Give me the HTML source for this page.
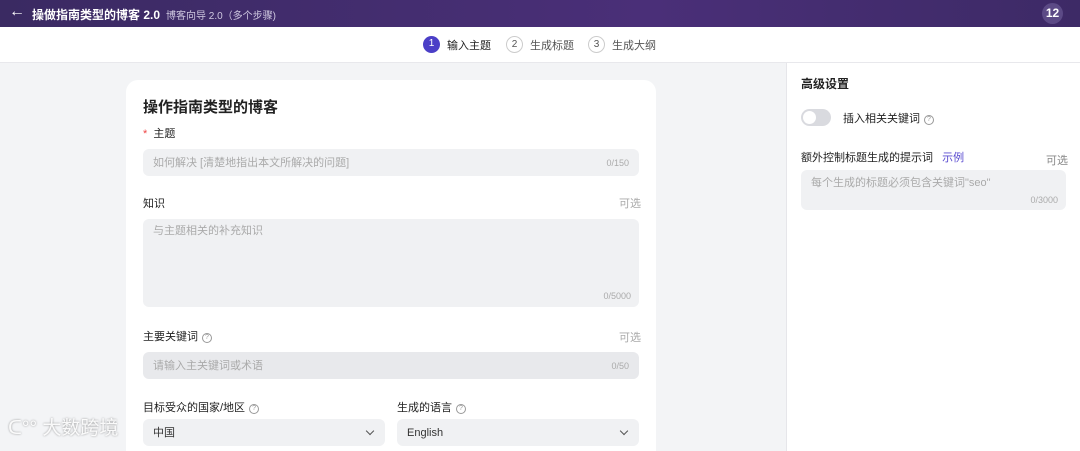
<!DOCTYPE html>
<html><head><meta charset="utf-8"><style>
*{box-sizing:border-box;margin:0;padding:0}
html,body{width:1080px;height:451px;overflow:hidden}
body{background:#f3f4f6;font-family:"Liberation Sans","Noto Sans CJK SC",sans-serif;position:relative;color:#222}
.abs{position:absolute}
.top{left:0;top:0;width:1080px;height:27px;background:linear-gradient(90deg,#3a2a62,#4a2f78 60%,#3d2a66)}
.steps{left:0;top:27px;width:1080px;height:36px;background:#fff;border-bottom:1px solid #e8e8ec}
.right{left:786px;top:63px;width:294px;height:388px;background:#fff;border-left:1px solid #e6e6ea}
.card{left:126px;top:80px;width:530px;height:371px;background:#fff;border-radius:12px 12px 0 0}
.inp{background:#f0f1f3;border-radius:6px;font-size:11px;color:#aaa}
.inp span{line-height:14px}
.lbl{font-size:11px;color:#222}
.opt{font-size:11px;color:#aaa}
.circ{width:17px;height:17px;border-radius:50%;font-size:10px;text-align:center;line-height:16px}
.q{display:inline-block;width:10px;height:10px;border:1px solid #999;border-radius:50%;font-size:7px;line-height:8px;text-align:center;color:#999;vertical-align:1px;margin-left:4px}
.chev{position:absolute;right:12px;top:9px;width:6px;height:6px;border-right:1px solid #555;border-bottom:1px solid #555;transform:rotate(45deg)}
</style></head><body>
<div class="abs top"></div>
<div class="abs" style="left:9px;top:4px;color:#fff;font-size:16px;line-height:16px">←</div>
<div class="abs" style="left:32px;top:6px;color:#fff;font-size:12px;font-weight:bold">操做指南类型的博客 2.0</div>
<div class="abs" style="left:166px;top:7px;color:#cfc8e0;font-size:10px">博客向导 2.0（多个步骤)</div>
<div class="abs" style="left:1042px;top:3px;width:21px;height:21px;border-radius:50%;background:#5c4a86;color:#fff;font-size:12px;text-align:center;line-height:21px;font-weight:bold">12</div>
<div class="abs steps"></div>
<div class="abs circ" style="left:423px;top:36px;background:#4b3fc7;color:#fff">1</div>
<div class="abs" style="left:447px;top:37px;font-size:11px;color:#222">输入主题</div>
<div class="abs circ" style="left:506px;top:36px;border:1px solid #ccc;color:#555">2</div>
<div class="abs" style="left:530px;top:37px;font-size:11px;color:#555">生成标题</div>
<div class="abs circ" style="left:588px;top:36px;border:1px solid #ccc;color:#555">3</div>
<div class="abs" style="left:612px;top:37px;font-size:11px;color:#555">生成大纲</div>

<div class="abs card"></div>
<div class="abs" style="left:143px;top:96px;font-size:15px;font-weight:bold">操作指南类型的博客</div>
<div class="abs lbl" style="left:143px;top:125px"><span style="color:#e44">*</span>&nbsp; 主题</div>
<div class="abs inp" style="left:143px;top:149px;width:496px;height:27px"><span class="abs" style="left:10px;top:7px">如何解决 [清楚地指出本文所解决的问题]</span><span class="abs" style="right:10px;top:7px;font-size:9px">0/150</span></div>
<div class="abs lbl" style="left:143px;top:195px">知识</div>
<div class="abs opt" style="left:619px;top:195px">可选</div>
<div class="abs inp" style="left:143px;top:219px;width:496px;height:88px"><span class="abs" style="left:10px;top:5px">与主题相关的补充知识</span><span class="abs" style="right:8px;bottom:4px;font-size:9px">0/5000</span></div>
<div class="abs lbl" style="left:143px;top:328px">主要关键词<span class="q">?</span></div>
<div class="abs opt" style="left:619px;top:329px">可选</div>
<div class="abs inp" style="left:143px;top:352px;width:496px;height:27px;background:#e8e9ec"><span class="abs" style="left:10px;top:7px">请输入主关键词或术语</span><span class="abs" style="right:10px;top:7px;font-size:9px">0/50</span></div>
<div class="abs lbl" style="left:143px;top:399px">目标受众的国家/地区<span class="q">?</span></div>
<div class="abs lbl" style="left:397px;top:399px">生成的语言<span class="q">?</span></div>
<div class="abs inp" style="left:143px;top:419px;width:242px;height:27px;color:#333"><span class="abs" style="left:10px;top:7px">中国</span><span class="chev"></span></div>
<div class="abs inp" style="left:397px;top:419px;width:242px;height:27px;color:#333"><span class="abs" style="left:10px;top:7px">English</span><span class="chev"></span></div>

<div class="abs" style="left:8px;top:418px;font-size:19px;line-height:22px;color:rgba(255,255,255,.92);text-shadow:0 0 2px rgba(0,0,0,.4)">ᑕ°° 大数跨境</div>

<div class="abs right"></div>
<div class="abs" style="left:801px;top:75px;font-size:12px;font-weight:bold">高级设置</div>
<div class="abs" style="left:801px;top:109px;width:30px;height:17px;border-radius:9px;background:#d9dadf"><div class="abs" style="left:2px;top:2px;width:13px;height:13px;border-radius:50%;background:#fff"></div></div>
<div class="abs lbl" style="left:843px;top:110px">插入相关关键词<span class="q">?</span></div>
<div class="abs lbl" style="left:801px;top:149px">额外控制标题生成的提示词 &nbsp;&nbsp;<span style="color:#5a4bd0">示例</span></div>
<div class="abs opt" style="left:1046px;top:152px;color:#888">可选</div>
<div class="abs inp" style="left:801px;top:170px;width:265px;height:40px"><span class="abs" style="left:10px;top:6px">每个生成的标题必须包含关键词"seo"</span><span class="abs" style="right:8px;bottom:3px;font-size:9px">0/3000</span></div>
</body></html>
